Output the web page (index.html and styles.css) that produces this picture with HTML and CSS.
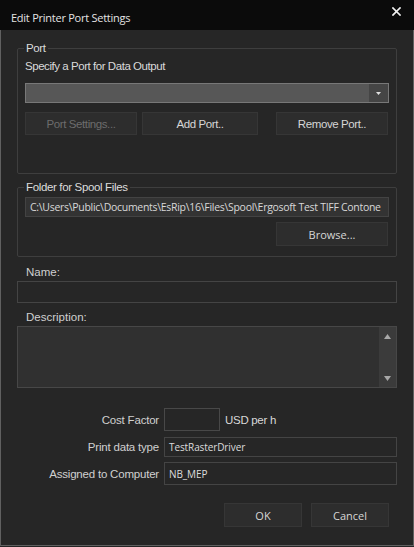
FILE: index.html
```html
<!DOCTYPE html>
<html>
<head>
<meta charset="utf-8">
<link rel="stylesheet" href="styles.css">
</head>
<body>
<div class="window">
  <div class="titlebar">
    <span class="title">Edit Printer Port Settings</span>
    <svg class="close" width="9" height="9" viewBox="0 0 9 9"><path d="M1 1 L8 8 M8 1 L1 8" stroke="#f2f2f2" stroke-width="1.7" stroke-linecap="square"/></svg>
  </div>
  <div class="content">
    <div class="group port">
      <span class="legend">Port</span>
      <div class="hint">Specify a Port for Data Output</div>
      <div class="combo">
        <div class="combo-field"></div>
        <div class="combo-btn"><svg width="5" height="3" viewBox="0 0 5 3"><path d="M0 0 H5 L2.5 3 Z" fill="#e0e0e0"/></svg></div>
      </div>
      <div class="btnrow">
        <div class="btn arial disabled b-ps">Port Settings...</div>
        <div class="btn arial b-add">Add Port..</div>
        <div class="btn arial b-rem">Remove Port..</div>
      </div>
    </div>
    <div class="group folder">
      <span class="legend">Folder for Spool Files</span>
      <div class="path">C:\Users\Public\Documents\EsRip\16\Files\Spool\Ergosoft Test TIFF Contone</div>
      <div class="browse-row"><div class="btn segoe b-browse">Browse...</div></div>
    </div>
    <div class="label name-label">Name:</div>
    <div class="input name-input"></div>
    <div class="label desc-label">Description:</div>
    <div class="textarea">
      <div class="ta-field"></div>
      <div class="scrollbar">
        <svg width="7" height="5" viewBox="0 0 7 5"><path d="M0 5 L3.5 0 L7 5 Z" fill="#a8a8a8"/></svg>
        <svg width="7" height="5" viewBox="0 0 7 5"><path d="M0 0 L3.5 5 L7 0 Z" fill="#a8a8a8"/></svg>
      </div>
    </div>
    <div class="form">
      <div class="frow r-cost">
        <div class="flabel">Cost Factor</div>
        <div class="input cost"></div>
        <span class="unit">USD per h</span>
      </div>
      <div class="frow r-type">
        <div class="flabel">Print data type</div>
        <div class="input wide h20">TestRasterDriver</div>
      </div>
      <div class="frow r-comp">
        <div class="flabel">Assigned to Computer</div>
        <div class="input w235 h23">NB_MEP</div>
      </div>
    </div>
    <div class="footer">
      <div class="btn segoe b-ok">OK</div>
      <div class="btn segoe b-ok">Cancel</div>
    </div>
  </div>
</div>
</body>
</html>
```
FILE: styles.css
```css
html, body {
  margin: 0;
  padding: 0;
  background: #262626;
}
.window {
  width: 414px;
  height: 546px;
  box-sizing: border-box;
  border: 1px solid #606060;
  border-top: none;
  background: #262626;
  color: #d4d4d4;
  font-family: "Liberation Sans", Arial, sans-serif;
  font-size: 11px;
}
.titlebar {
  height: 30px;
  background: #0b0b0b;
  display: flex;
  align-items: center;
  justify-content: space-between;
  padding: 0 13px 0 11px;
  margin: 0 -1px;
}
.title {
  font-family: "Open Sans", sans-serif;
  font-size: 11px;
  letter-spacing: -0.25px;
  color: #e4e4e4;
  margin-top: 5px;
}
.close {
  margin-top: -8px;
}
.content {
  padding: 18px 16px 0 16px;
}
.group {
  position: relative;
  border: 1px solid #3e3e3e;
  border-radius: 2px;
  box-sizing: border-box;
  padding: 0 7px;
}
.legend {
  position: absolute;
  top: -8px;
  left: 6px;
  padding: 0 2px;
  background: #262626;
  line-height: 14px;
  font-size: 11.5px;
  letter-spacing: -0.35px;
  color: #dcdcdc;
}
.port {
  height: 126px;
  padding-top: 10px;
}
.hint {
  line-height: 14px;
  font-size: 11.5px;
  letter-spacing: -0.45px;
  color: #dadada;
}
.combo {
  margin-top: 10px;
  height: 20px;
  display: flex;
  box-sizing: border-box;
  border: 1px solid #787878;
  background: #575757;
}
.combo-field {
  flex: 1;
}
.combo-btn {
  width: 19px;
  background: #454545;
  display: flex;
  align-items: center;
  justify-content: center;
}
.btnrow {
  margin-top: 9px;
  display: flex;
}
.btn {
  height: 23px;
  box-sizing: border-box;
  border: 1px solid #363636;
  background: #2d2d2d;
  display: flex;
  align-items: center;
  justify-content: center;
  color: #d6d6d6;
}
.arial {
  font-family: "Liberation Sans", Arial, sans-serif;
  font-size: 11.5px;
  letter-spacing: -0.4px;
}
.segoe {
  font-family: "Open Sans", sans-serif;
  font-size: 11px;
}
.disabled {
  color: #6c6c6c;
}
.b-ps { width: 112px; }
.b-add { width: 116px; margin-left: 5px; }
.b-rem { width: 112px; margin-left: 18px; }
.folder {
  margin-top: 13px;
  height: 70px;
  padding-top: 9px;
}
.path {
  height: 20px;
  box-sizing: border-box;
  border: 1px solid #434343;
  background: #333333;
  font-family: "Open Sans", sans-serif;
  font-size: 10.5px;
  letter-spacing: -0.29px;
  line-height: 18px;
  padding-left: 4px;
  white-space: nowrap;
  overflow: hidden;
  color: #d8d8d8;
}
.browse-row {
  display: flex;
  justify-content: flex-end;
  margin-top: 5px;
  padding-right: 1px;
}
.b-browse {
  width: 112px;
  height: 24px;
}
.label {
  line-height: 14px;
  font-size: 11.5px;
  padding-left: 9px;
  color: #d0d0d0;
}
.name-label { margin-top: 8px; }
.desc-label { margin-top: 7px; }
.input {
  box-sizing: border-box;
  border: 1px solid #444444;
  background: #262626;
  font-family: "Open Sans", sans-serif;
  font-size: 10px;
  letter-spacing: -0.1px;
  color: #dcdcdc;
  padding-left: 4px;
  display: flex;
  align-items: center;
}
.name-input {
  margin-top: 2px;
  height: 22px;
}
.textarea {
  margin-top: 2px;
  height: 62px;
  box-sizing: border-box;
  border: 1px solid #474747;
  background: #303030;
  display: flex;
}
.ta-field { flex: 1; }
.scrollbar {
  width: 17px;
  background: #3b3b3b;
  display: flex;
  flex-direction: column;
  align-items: center;
  justify-content: space-between;
  padding: 7px 0 6px;
}
.form {
  margin-top: 20px;
}
.frow {
  display: flex;
  align-items: center;
}
.r-type { margin-top: 6px; }
.r-comp { margin-top: 5px; }
.flabel {
  width: 142px;
  flex: none;
  margin-right: 5px;
  text-align: right;
  font-size: 11.5px;
  letter-spacing: -0.2px;
  color: #d0d0d0;
}
.cost {
  width: 56px;
  height: 23px;
  border-color: #484848;
}
.unit {
  margin-left: 5px;
  font-size: 11.5px;
  letter-spacing: -0.3px;
  color: #d8d8d8;
}
.wide { width: 234px; }
.w235 { width: 235px; }
.h20 { height: 20px; }
.h23 { height: 23px; }
.footer {
  margin-top: 18px;
  display: flex;
  justify-content: flex-end;
  gap: 9px;
  padding-right: 8px;
}
.b-ok {
  width: 78px;
  height: 24px;
}
```
